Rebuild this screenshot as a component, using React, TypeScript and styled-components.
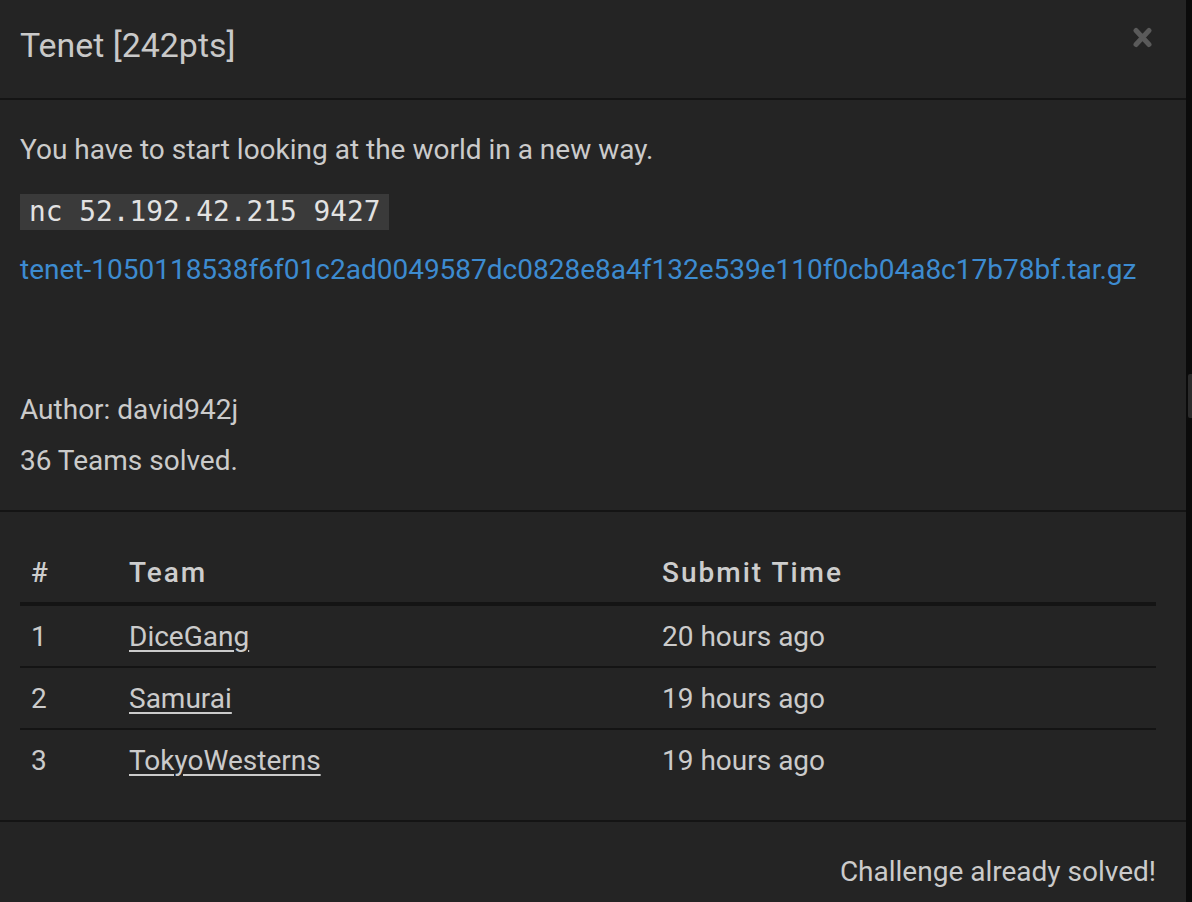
import React from "react";
import styled, { createGlobalStyle } from "styled-components";

const GlobalStyle = createGlobalStyle`
  html, body { margin: 0; padding: 0; background: #0b0b0b; }
  body { font-family: Roboto, "Liberation Sans", sans-serif; color: #cacaca; }
  * { box-sizing: border-box; }
`;

const Page = styled.div`
  display: flex;
  min-height: 902px;
  background: #0b0b0b;
`;

const Modal = styled.div`
  width: 1186px;
  flex: none;
  background: #242424;
  display: flex;
  flex-direction: column;
`;

const ScrollTrack = styled.div`
  flex: 1;
  display: flex;
  justify-content: flex-end;
  padding-top: 374px;
`;

const ScrollThumb = styled.div`
  width: 4px;
  height: 44px;
  background: #2b2b2b;
  border-radius: 2px 0 0 2px;
`;

const Header = styled.div`
  height: 100px;
  padding: 0 34px 0 20px;
  display: flex;
  align-items: center;
  justify-content: space-between;
  border-bottom: 2px solid #141414;
`;

const Title = styled.h4`
  margin: 0 0 6px;
  font-size: 33.9px;
  font-weight: 400;
  line-height: 42px;
  color: #c9c9c9;
`;

const CloseButton = styled.button`
  align-self: flex-start;
  margin-top: 27px;
  padding: 0;
  border: 0;
  background: none;
  width: 19px;
  height: 21px;
  display: flex;
  cursor: pointer;
`;

const Section = styled.div<{ $top: number; $bottom: number }>`
  padding: ${(p) => p.$top}px 30px ${(p) => p.$bottom}px 20px;
  border-bottom: 2px solid #141414;
`;

const Stack = styled.div<{ $gap: number; $mt?: number }>`
  display: flex;
  flex-direction: column;
  gap: ${(p) => p.$gap}px;
  margin-top: ${(p) => p.$mt ?? 0}px;
`;

const Line = styled.p`
  margin: 0;
  font-size: 28px;
  line-height: 42px;
  color: #cbcbcb;
  white-space: nowrap;
`;

const Code = styled.code`
  display: inline-block;
  height: 36px;
  line-height: 36px;
  padding: 0 9px;
  background: #3a3a3a;
  color: #e2e2e2;
  font-family: "DejaVu Sans Mono", monospace;
  font-size: 27.8px;
  vertical-align: middle;
`;

const FileLink = styled.a`
  color: #3d8bd0;
  text-decoration: none;
`;

const Table = styled.table`
  width: 1136px;
  border-collapse: separate;
  border-spacing: 0;
  table-layout: fixed;
  font-size: 28px;
`;

const Th = styled.th<{ $w: number }>`
  box-sizing: content-box;
  width: ${(p) => p.$w - 22}px;
  height: 60px;
  padding: 0 11px;
  text-align: left;
  font-weight: 500;
  letter-spacing: 2px;
  color: #cdcdcd;
  border-bottom: 4px solid #141414;
  vertical-align: middle;
`;

const Row = styled.tr`
  & + & td {
    border-top: 2px solid #141414;
  }
`;

const Td = styled.td`
  box-sizing: content-box;
  height: 60px;
  padding: 0 11px;
  color: #cbcbcb;
  vertical-align: middle;
  white-space: nowrap;
  line-height: 42px;
  padding-top: 1px;
  height: 59px;
`;

const TeamLink = styled.a`
  color: #cbcbcb;
  text-decoration: underline;
  text-underline-offset: 4px;
  text-decoration-thickness: 2px;
`;

const Footer = styled.div`
  padding: 29px 30px 9px 20px;
  display: flex;
  justify-content: flex-end;
`;

const rows = [
  { n: 1, team: "DiceGang", time: "20 hours ago" },
  { n: 2, team: "Samurai", time: "19 hours ago" },
  { n: 3, team: "TokyoWesterns", time: "19 hours ago" },
];

export default function App() {
  return (
    <>
      <GlobalStyle />
      <Page>
        <Modal>
          <Header>
            <Title>Tenet [242pts]</Title>
            <CloseButton aria-label="Close">
              <svg width="19" height="21" viewBox="0 0 19 21">
                <path
                  d="M3 3.5 L16 17.5 M16 3.5 L3 17.5"
                  stroke="#5a5a5a"
                  strokeWidth="5"
                  strokeLinecap="round"
                  fill="none"
                />
              </svg>
            </CloseButton>
          </Header>
          <Section $top={29} $bottom={28}>
            <Stack $gap={18}>
              <Line>You have to start looking at the world in a new way.</Line>
              <Line>
                <Code>nc 52.192.42.215 9427</Code>
              </Line>
              <Line>
                <FileLink href="#">
                  tenet-1050118538f6f01c2ad0049587dc0828e8a4f132e539e110f0cb04a8c17b78bf.tar.gz
                </FileLink>
              </Line>
            </Stack>
            <Stack $gap={9} $mt={98}>
              <Line>Author: david942j</Line>
              <Line>36 Teams solved.</Line>
            </Stack>
          </Section>
          <Section $top={30} $bottom={30}>
            <Table>
              <thead>
                <tr>
                  <Th $w={98}>#</Th>
                  <Th $w={533}>Team</Th>
                  <Th $w={505}>Submit Time</Th>
                </tr>
              </thead>
              <tbody>
                {rows.map((r) => (
                  <Row key={r.n}>
                    <Td>{r.n}</Td>
                    <Td>
                      <TeamLink href="#">{r.team}</TeamLink>
                    </Td>
                    <Td>{r.time}</Td>
                  </Row>
                ))}
              </tbody>
            </Table>
          </Section>
          <Footer>
            <Line>Challenge already solved!</Line>
          </Footer>
        </Modal>
        <ScrollTrack>
          <ScrollThumb />
        </ScrollTrack>
      </Page>
    </>
  );
}
